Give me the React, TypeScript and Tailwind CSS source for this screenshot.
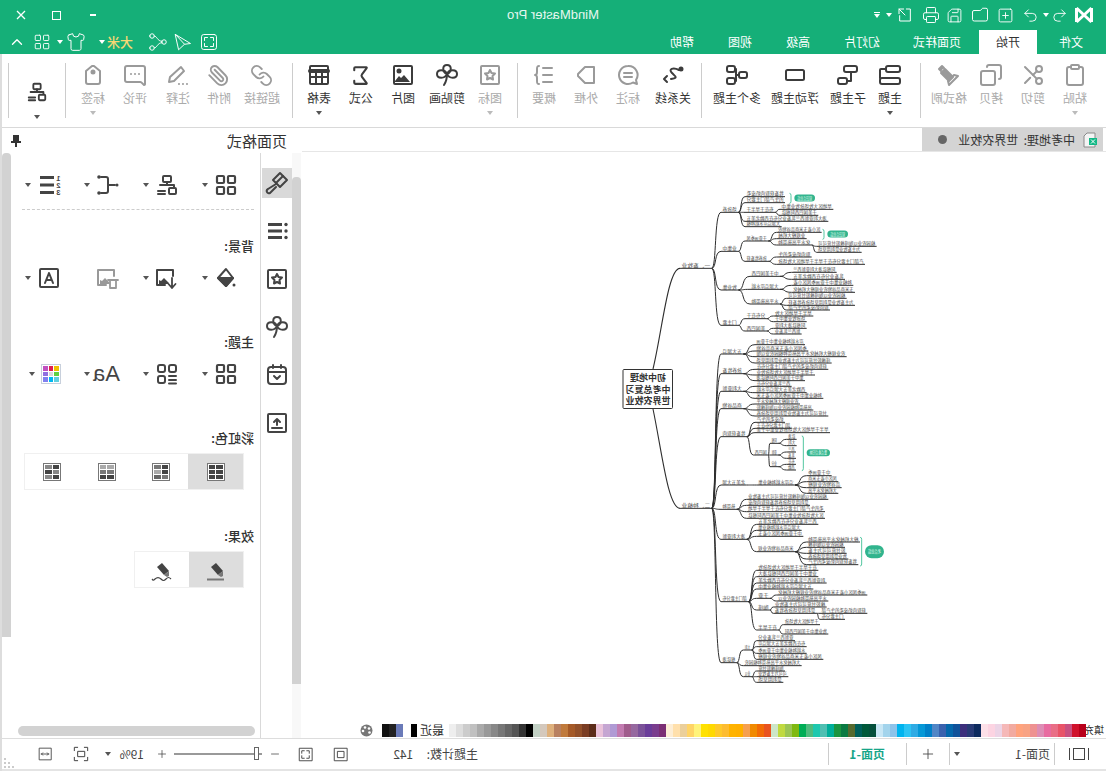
import type { ReactNode } from 'react';
import {
  ChevronUp,
  Clipboard,
  Copy,
  Folder,
  LayoutGrid,
  Link,
  MessageSquareMore,
  Minus,
  Paperclip,
  Plus,
  Printer,
  Redo2,
  Save,
  Scissors,
  Shirt,
  Sigma,
  SquarePlus,
  Undo2,
} from 'lucide-react';

const Svg = ({ children, size = 24 }: { children: ReactNode; size?: number }) => (
  <svg
    width={size}
    height={size}
    viewBox="0 0 24 24"
    fill="none"
    stroke="currentColor"
    strokeWidth="2"
    strokeLinecap="round"
    strokeLinejoin="round"
  >
    {children}
  </svg>
);

const Caret = ({ light }: { light?: boolean }) => (
  <span
    className={`block h-0 w-0 border-x-[3px] border-t-[4px] border-x-transparent ${
      light ? 'border-t-[#bbbbbb]' : 'border-t-[#555555]'
    }`}
  />
);

const TopicIcon = () => (
  <Svg>
    <rect x="2" y="3" width="14" height="6" rx="2" />
    <rect x="2" y="15" width="20" height="6" rx="2" />
    <path d="M16 6h5a1 1 0 0 1 1 1v8" />
  </Svg>
);
const SubTopicIcon = () => (
  <Svg>
    <rect x="3" y="3" width="13" height="6" rx="2" />
    <rect x="13" y="15" width="9" height="6" rx="2" />
    <path d="M9 9v9h4" />
  </Svg>
);
const FloatIcon = () => (
  <Svg>
    <rect x="3" y="7" width="18" height="10" rx="1.5" />
  </Svg>
);
const MultiIcon = () => (
  <Svg>
    <rect x="2" y="9" width="8" height="6" rx="2" />
    <rect x="14" y="3" width="8" height="6" rx="2" />
    <rect x="14" y="15" width="8" height="6" rx="2" />
    <path d="M10 12h2M14 6h-1v12h1" />
  </Svg>
);
const RelationIcon = () => (
  <Svg>
    <path d="M6 7c6-3 11-1 7 3-3 3-7 5 1 6" />
    <circle cx="4" cy="6" r="1.5" fill="currentColor" />
    <path d="M18 13l3 3-3 3" />
  </Svg>
);
const CalloutIcon = () => (
  <Svg>
    <path d="M12 3a9 9 0 1 1-5 16.500l-4 1.500 1-4A9 9 0 0 1 12 3z" />
    <path d="M8 10h8M8 14h8" />
  </Svg>
);
const BoundaryIcon = () => (
  <Svg>
    <path d="M4 4h9l7 7v2l-7 7H4z" />
  </Svg>
);
const SummaryIcon = () => (
  <Svg>
    <path d="M4 5h9M4 12h9M4 19h9" />
    <path d="M17 3c2 0 2 1 2 3v3c0 2 1 3 2 3-1 0-2 1-2 3v3c0 2 0 3-2 3" />
  </Svg>
);
const StickerIcon = () => (
  <Svg>
    <rect x="3" y="3" width="18" height="18" rx="1" />
    <path d="M12 7l1.500 3 3.500.5-2.500 2.500.5 3.500-3-1.500-3 1.500.5-3.500L7 10.500l3.500-.5z" />
  </Svg>
);
const PictureIcon = () => (
  <Svg>
    <rect x="3" y="3" width="18" height="18" rx="1" />
    <path d="M5 19l6-7 3 3 2-2 4 5v1H5z" fill="currentColor" stroke="none" />
    <circle cx="16" cy="8" r="1.500" fill="currentColor" />
  </Svg>
);
const TableIcon = () => (
  <Svg>
    <rect x="3" y="3" width="18" height="18" rx="1" />
    <path d="M3 8h18" strokeWidth="4" />
    <path d="M3 14h18M9 10v11M15 10v11" />
  </Svg>
);
const PencilIcon = () => (
  <Svg>
    <path d="M6 8l3-4 11 10 1 5-5-1z" />
    <path d="M3 21h.01M7 21h.01M11 21h.01" />
  </Svg>
);
const TagIcon = () => (
  <Svg>
    <path d="M7 21a2 2 0 0 1-2-2V8l6-5h2l6 5v11a2 2 0 0 1-2 2z" />
    <circle cx="12" cy="9" r="1.500" fill="currentColor" />
  </Svg>
);
const BrushIcon = () => (
  <Svg>
    <path d="M8 14l8-8 4 4-8 8z" fill="currentColor" />
    <path d="M3 13l4-1 6 6-1 4z" />
    <path d="M17 5l2-2 3 3-2 2" fill="currentColor" />
  </Svg>
);
const TrefoilIcon = () => (
  <Svg>
    <path d="M12 11C7 9 7 2 12 2s5 7 0 9z" />
    <path d="M12 11C10 6 2 6 2 11s8 5 10 0z" />
    <path d="M12 11c2-5 10-5 10 0s-8 5-10 0z" />
    <path d="M12 11c0 4 1 8 3 11" />
  </Svg>
);
const PaintToolIcon = () => (
  <Svg>
    <path d="M2 9l7-7 7 7-7 7z" />
    <path d="M6 5l7 7" />
    <path d="M13 13l8 5a2 2 0 0 1-2 4l-6-6" />
  </Svg>
);
const OrgIcon = ({ size = 24 }: { size?: number }) => (
  <Svg size={size}>
    <rect x="8" y="3" width="8" height="6" rx="1" />
    <rect x="3" y="15" width="7" height="6" rx="1" />
    <path d="M12 9v3M5 14v-2h14M14 18h7M14 21h7" />
  </Svg>
);
const FishIcon = () => (
  <Svg>
    <path d="M5 12h7M19 4h-5a2 2 0 0 0-2 2v12a2 2 0 0 0 2 2h5" />
    <circle cx="3" cy="12" r="1.500" fill="currentColor" stroke="none" />
    <circle cx="21" cy="4" r="1.800" fill="currentColor" stroke="none" />
    <circle cx="21" cy="20" r="1.800" fill="currentColor" stroke="none" />
  </Svg>
);
const OutlineIcon = () => (
  <svg width="24" height="24" viewBox="0 0 24 24" fill="currentColor">
    <rect x="7" y="3" width="14" height="3" />
    <rect x="7" y="10.500" width="14" height="3" />
    <rect x="7" y="18" width="14" height="3" />
    <text x="0.500" y="8" fontSize="7.500" fontWeight="700" fontFamily="Liberation Sans">1</text>
    <text x="0.500" y="15" fontSize="7.500" fontWeight="700" fontFamily="Liberation Sans">2</text>
    <text x="0.500" y="22" fontSize="7.500" fontWeight="700" fontFamily="Liberation Sans">3</text>
  </svg>
);
const DotListIcon = () => (
  <svg width="24" height="24" viewBox="0 0 24 24" fill="currentColor">
    <rect x="7" y="4" width="14" height="3" />
    <rect x="7" y="10.500" width="14" height="3" />
    <rect x="7" y="17" width="14" height="3" />
    <circle cx="3" cy="5.500" r="1.700" />
    <circle cx="3" cy="12" r="1.700" />
    <circle cx="3" cy="18.500" r="1.700" />
  </svg>
);
const BucketIcon = () => (
  <Svg>
    <path d="M12 3l8 9-8 8-7-8z" />
    <path d="M5 12h15l-8 8z" fill="currentColor" />
    <circle cx="4" cy="19" r="1.500" fill="currentColor" stroke="none" />
  </Svg>
);
const BgPicIcon = ({ trash }: { trash?: boolean }) => (
  <Svg>
    <path d="M6 10V4h16v15h-8" />
    <path d="M10 17l5-5 3 3 2-1v4h-9z" fill="currentColor" stroke="none" />
    {trash ? (
      <path d="M2 14h10M4 14v8h6v-8" strokeWidth="1.800" />
    ) : (
      <path d="M7 12v10M3.500 18L7 22l3.500-4" strokeWidth="1.800" />
    )}
  </Svg>
);
const BoxLetterIcon = () => (
  <Svg>
    <rect x="3" y="3" width="18" height="18" rx="1" />
    <path d="M8 17l4-10 4 10M9.500 14h5" />
  </Svg>
);
const ThemeListIcon = () => (
  <Svg>
    <rect x="3" y="3" width="7" height="7" rx="2" />
    <rect x="14" y="3" width="7" height="7" rx="2" />
    <rect x="14" y="14" width="7" height="7" rx="2" />
    <path d="M3 14h7M3 18h7M3 21.500h7" />
  </Svg>
);
const ColorGridIcon = () => {
  const colors = [
    '#f0c000', '#e0204f', '#c050c0',
    '#60d040', '#d8d8d8', '#9070e0',
    '#60d0e0', '#00b8f0', '#8080f0',
  ];
  return (
    <span className="grid h-[20px] w-[20px] grid-cols-3 gap-[1px] border border-[#c8d0dc] bg-white p-[1px]">
      {colors.map((c) => (
        <span key={c} className="block" style={{ backgroundColor: c }} />
      ))}
    </span>
  );
};
const RainbowIcon = ({ shades }: { shades: string[] }) => (
  <span className="grid h-[18px] w-[18px] grid-cols-2 gap-[1px] border border-[#777777] bg-white p-[1px]">
    {shades.map((c, i) => (
      <span key={i} className="block" style={{ backgroundColor: c }} />
    ))}
  </span>
);
const HighlightIcon = ({ wave }: { wave?: boolean }) => (
  <svg width="24" height="24" viewBox="0 0 24 24" fill="none" stroke="#444444">
    <path d="M5 13l7-8 5 4-7 8z" fill="#444444" stroke="none" />
    <path d="M10 17l-3 2-2-1 0-5z" fill="#777777" stroke="none" />
    {wave ? (
      <path d="M3 21c2-2 3-2 5 0s3 2 5 0 4-2 6 0 2 1 3 0" strokeWidth="1.200" />
    ) : (
      <path d="M4 21.500h17" stroke="#777777" strokeWidth="2" />
    )}
  </svg>
);
const CalendarIcon = () => (
  <Svg>
    <rect x="3" y="4" width="18" height="17" rx="3" />
    <path d="M3 9h18M8 2v3M16 2v3M9 13l3 3 3-3" />
  </Svg>
);
const UploadBoxIcon = () => (
  <Svg>
    <rect x="3" y="3" width="18" height="18" rx="1" />
    <path d="M12 14V8M9 11l3-3 3 3M7 17h10" />
  </Svg>
);

const ribbonGroups = [
  {
    sep: 'ml-[7px] mr-[9px]',
    items: [
      { label: '粘贴', w: 'w-[42px]', icon: <Clipboard size={24} strokeWidth={2} />, off: true, caret: true },
      { label: '剪切', w: 'w-[42px]', icon: <Scissors size={24} strokeWidth={2} />, off: true },
      { label: '拷贝', w: 'w-[42px]', icon: <Copy size={24} strokeWidth={2} />, off: true },
      { label: '格式刷', w: 'w-[42px]', icon: <BrushIcon />, off: true },
    ],
  },
  {
    sep: 'ml-[9px] mr-[7px]',
    items: [
      { label: '主题', w: 'w-[42px]', icon: <TopicIcon />, caret: true },
      { label: '子主题', w: 'w-[42px]', icon: <SubTopicIcon /> },
      { label: '浮动主题', w: 'w-[64px]', icon: <FloatIcon /> },
      { label: '多个主题', w: 'w-[52px]', icon: <MultiIcon /> },
    ],
  },
  {
    sep: 'ml-[2px] mr-[6px]',
    items: [
      { label: '关系线', w: 'w-[42px]', icon: <RelationIcon /> },
      { label: '标注', w: 'w-[48px]', icon: <CalloutIcon />, off: true },
      { label: '外框', w: 'w-[36px]', icon: <BoundaryIcon />, off: true },
      { label: '概要', w: 'w-[48px]', icon: <SummaryIcon />, off: true },
    ],
  },
  {
    sep: 'ml-[4px] mr-[9px]',
    items: [
      { label: '图标', w: 'w-[42px]', icon: <StickerIcon />, off: true, caret: true },
      { label: '剪贴画', w: 'w-[44px]', icon: <TrefoilIcon /> },
      { label: '图片', w: 'w-[44px]', icon: <PictureIcon /> },
      { label: '公式', w: 'w-[40px]', icon: <Sigma size={25} strokeWidth={2} /> },
      { label: '表格', w: 'w-[44px]', icon: <TableIcon />, caret: true },
    ],
  },
  {
    sep: 'ml-[9px] mr-0',
    items: [
      { label: '超链接', w: 'w-[42px]', icon: <Link size={23} strokeWidth={2} />, off: true },
      { label: '附件', w: 'w-[44px]', icon: <Paperclip size={23} strokeWidth={2} />, off: true },
      { label: '注释', w: 'w-[38px]', icon: <PencilIcon />, off: true },
      { label: '评论', w: 'w-[48px]', icon: <MessageSquareMore size={24} strokeWidth={2} />, off: true },
      { label: '标签', w: 'w-[36px]', icon: <TagIcon />, off: true, caret: true },
    ],
  },
];

const swatches = [
  '#b8001a', '#d0112b', '#c85080', '#e85468', '#e96e86', '#e86ba0', '#dd8db5', '#ee9191', '#f8a283', '#ffa37d',
  '#f2aaa0', '#f5b8b8', '#ecd4e6', '#fcd4e2', '#fde0e8', '#0d2a5e', '#283a75', '#3c2f7c', '#10529a', '#0568ab',
  '#3a62ae', '#5186c6', '#0080c8', '#0598d7', '#2fabe4', '#2cc4f4', '#00b4ef', '#8dc3ea', '#a3d4ec', '#c9e7f5',
  '#05503c', '#00593a', '#005f5a', '#566a2e', '#0a7a42', '#1a9440', '#00ae9a', '#4fbfb2', '#1dc8ae', '#4fbb7d',
  '#00ad56', '#7fb910', '#9bc554', '#c0d940', '#cde6c8', '#e9531f', '#f26b05', '#f18a00', '#f6a050', '#ffb000',
  '#ffb300', '#fdbc30', '#ffc92a', '#ffd900', '#ffe100', '#fff37a', '#ffd466', '#ebcf9a', '#ffe0ac', '#fdeed6',
  '#7c2f75', '#7a3d8e', '#6a3d99', '#7b5299', '#96689f', '#a05c8c', '#c27bb0', '#b09ad4', '#c5a6d2', '#eac3da',
  '#5c2d1a', '#7a3d24', '#92502a', '#a55a28', '#c07a3c', '#b88060', '#deb07c', '#d4c8bc', '#c2d0c4', '#000000',
  '#333333', '#555555', '#666666', '#777777', '#888888', '#999999', '#aaaaaa', '#c0c0c0', '#cccccc', '#dddddd',
  '#eeeeee',
];

type MapNode = { a: number; b: number; y: number; k?: MapNode[]; t?: string };
const n = (a: number, b: number, y: number, k?: MapNode[], t?: string): MapNode => ({ a, b, y, k, t });
const z8 = 750;

const mapTree: MapNode[] = [
  n(210, 305, 265, [
    n(333, 385, 97, [
      n(405, 525, 50),
      n(405, 525, 68),
      n(405, 495, 97, [n(510, 670, 88), n(510, 625, 106)]),
      n(405, 655, 124),
      n(405, 515, 140),
    ]),
    n(333, 385, 214, [
      n(405, 475, 183, [
        n(500, 635, 157),
        n(500, 590, 176),
        n(500, 605, 195, [n(620, 800, 199), n(620, 755, 217)]),
      ]),
      n(405, 475, 244, [n(500, 605, 231), n(500, 765, 253)]),
    ]),
    n(333, 385, 330, [
      n(420, 510, 289, [n(545, 680, 277), n(545, 705, 298)]),
      n(420, 510, 328, [n(545, 730, 316), n(545, 735, 337)]),
      n(420, 510, 372, [n(530, 710, 355), n(530, 735, 376), n(530, 660, 390)]),
    ]),
    n(333, 385, 436, [
      n(405, 470, 416, [n(490, 610, 408), n(490, 590, 425)]),
      n(405, 470, 453, [n(490, 590, 445), n(490, 575, 462)]),
    ]),
  ], '一、畜牧业'),
  n(210, 305, z8 + 235, [
    n(333, 400, 522, [n(435, 585, 494), n(435, 595, 513), n(435, 710, 530), n(435, 665, 549)]),
    n(333, 400, 581, [n(435, 655, 568), n(435, 615, 585), n(435, 585, 602)]),
    n(333, 400, 634, [n(435, 545, 619), n(435, 590, 638), n(435, 640, 655)]),
    n(333, 400, 686, [n(435, 570, 672), n(435, 610, 690), n(435, 655, 708)]),
    n(333, 410, z8 + 20, [
      n(435, 525, 727),
      n(435, 545, 745),
      n(435, 660, z8 + 8),
      n(430, 475, z8 + 75, [
        n(480, 505, z8 + 40, [n(530, 560, z8 + 28), n(530, 560, z8 + 47)]),
        n(480, 505, z8 + 75, [n(530, 558, z8 + 66), n(530, 558, z8 + 85)]),
        n(480, 505, z8 + 110, [n(530, 558, z8 + 103), n(530, 558, z8 + 120)]),
      ]),
    ]),
    n(333, 410, z8 + 165, [
      n(440, 555, z8 + 165, [
        n(590, 665, z8 + 137),
        n(590, 685, z8 + 155),
        n(590, 695, z8 + 173),
        n(590, 685, z8 + 190),
      ]),
    ]),
    n(333, 380, z8 + 238, [
      n(410, 655, z8 + 208),
      n(410, 600, z8 + 226),
      n(410, 645, z8 + 245),
      n(410, 645, z8 + 265),
    ]),
    n(333, 410, z8 + 328, [
      n(440, 625, z8 + 283),
      n(440, 575, z8 + 301),
      n(440, 580, z8 + 319),
      n(440, 555, z8 + 365, [
        n(590, 750, z8 + 336),
        n(590, 705, z8 + 352),
        n(590, 710, z8 + 370),
        n(590, 715, z8 + 387),
        n(590, 745, z8 + 404),
      ]),
    ]),
    n(333, 415, z8 + 515, [
      n(440, 625, z8 + 421),
      n(440, 625, z8 + 440),
      n(440, 650, z8 + 459),
      n(440, 610, z8 + 477),
      n(440, 480, z8 + 505, [n(500, 772, z8 + 495), n(500, 655, z8 + 513)]),
      n(440, 480, z8 + 540, [
        n(490, 650, z8 + 531),
        n(490, 620, z8 + 550, [n(630, 772, z8 + 550), n(630, 705, z8 + 568)]),
      ]),
      n(440, 505, z8 + 600, [n(520, 630, z8 + 584), n(520, 655, z8 + 612)]),
    ]),
    n(333, 380, z8 + 698, [
      n(400, 425, z8 + 660, [
        n(440, 555, z8 + 632),
        n(440, 590, z8 + 650),
        n(440, 590, z8 + 670),
        n(440, 640, z8 + 688),
      ]),
      n(400, 575, z8 + 707),
      n(400, 425, z8 + 740, [n(440, 525, z8 + 723), n(440, 535, z8 + 740), n(440, 520, z8 + 757)]),
    ]),
  ], '二、种植业'),
];

const words =
  '畜牧业是利用草场放养牲畜获取肉奶皮毛的生产部门主要分布在干旱半干旱地区大牧场放牧业集中于美国巴西阿根廷澳大利亚新西兰乳畜业分布在西欧北美五大湖沿岸水稻种植业集中于亚洲季风区小麦玉米商品谷物农业规模大机械化水平高热带种植园农业以咖啡橡胶甘蔗可可为主';

// reference is a mirror image, the whole page is flipped so x runs from the far side
const mx = (zx: number) => 1106 - (610 + zx / 3);
const my = (zy: number) => 180 + zy / 3 - 152;

const curve = (ax: number, ay: number, bx: number, by: number) => {
  const d = bx - ax;
  return `M${ax} ${ay}C${ax + d * 0.55} ${ay} ${ax + d * 0.25} ${by} ${bx} ${by}`;
};

const mapPaths: string[] = [];
const mapTexts: { x: number; y: number; w: number; s: string }[] = [];
let cursor = 0;
const walk = (node: MapNode, parent?: MapNode) => {
  const left = mx(node.b);
  const right = mx(node.a);
  mapPaths.push(`M${right} ${my(node.y)}H${left}`);
  if (parent) mapPaths.push(curve(mx(parent.b), my(parent.y), right, my(node.y)));
  const w = right - left - 3;
  const len = Math.max(2, Math.round(w / 4.4));
  const s = node.t ?? (words + words).slice(cursor, cursor + len);
  cursor = (cursor + len) % words.length;
  mapTexts.push({ x: left + 1.500, y: my(node.y) - 1.500, w, s });
  node.k?.forEach((c) => walk(c, node));
};
mapTree.forEach((r) => walk(r));

const pills = [
  { a: 553, b: 615, y: 54, s: '知识点总结' },
  { a: 652, b: 714, y: 162, s: '知识点总结' },
  { a: 590, b: 660, y: z8 + 68, s: '重点难点归纳' },
  { a: 765, b: 822, y: z8 + 365, s: '考点总结', tall: true },
];
const brackets = [
  { x: 543, y1: 40, y2: 70 },
  { x: 642, y1: 148, y2: 178 },
  { x: 580, y1: z8 + 18, y2: z8 + 122 },
  { x: 755, y1: z8 + 322, y2: z8 + 408 },
];

function MindMap() {
  const rootX = 1106 - 673;
  return (
    <svg viewBox="0 0 804 570" className="block h-[570px] w-[804px]" fontFamily="Noto Sans CJK SC, sans-serif">
      <g fill="none" stroke="#2e2e2e" strokeWidth="1">
        {mapPaths.map((d, i) => (
          <path key={i} d={d} />
        ))}
        <path d={`M${1106 - 653} 217C${1106 - 662} 180 ${1106 - 668} 116 ${mx(210)} ${my(265)}`} strokeWidth="1.100" />
        <path d={`M${1106 - 653} 257C${1106 - 662} 300 ${1106 - 668} 356 ${mx(210)} ${my(z8 + 235)}`} strokeWidth="1.100" />
      </g>
      <g fill="#444444" fontSize="4.500">
        {mapTexts.map((t, i) => (
          <text key={i} x={t.x} y={t.y} textLength={t.w} lengthAdjust="spacingAndGlyphs">
            {t.s}
          </text>
        ))}
      </g>
      {brackets.map((b) => (
        <path
          key={b.y1}
          d={`M${mx(b.x) + 1.500} ${my(b.y1)}Q${mx(b.x)} ${my(b.y1)} ${mx(b.x)} ${my(b.y1) + 2}V${my(b.y2) - 2}Q${mx(b.x)} ${my(b.y2)} ${mx(b.x) + 1.500} ${my(b.y2)}`}
          fill="none"
          stroke="#3fbf95"
          strokeWidth="0.900"
        />
      ))}
      {pills.map((p) => {
        const h = p.tall ? 6.500 : 3.500;
        return (
          <g key={p.y}>
            <rect x={mx(p.b)} y={my(p.y) - h} width={(p.b - p.a) / 3} height={h * 2} rx={h} fill="#31b48d" />
            <text x={mx(p.b) + 3} y={my(p.y) + 1.500} fontSize="4.500" fill="#e8fff6" textLength={(p.b - p.a) / 3 - 6} lengthAdjust="spacingAndGlyphs">
              {p.s}
            </text>
          </g>
        );
      })}
      <rect x={rootX + 0.500} y={217.500} width="49.500" height="39" rx="1" fill="#ffffff" stroke="#333333" />
      <g fill="#333333" fontSize="9" fontWeight="700" textAnchor="middle">
        <text x={rootX + 25} y={228.500}>初中地理</text>
        <text x={rootX + 25} y={240.500}>中考总复习</text>
        <text x={rootX + 25} y={252}>世界农牧业</text>
      </g>
    </svg>
  );
}

function ToolRow({ cells }: { cells: { icon: ReactNode; caret?: boolean; off?: boolean }[] }) {
  return (
    <div className="grid h-[24px] w-[244px] grid-cols-4 pl-[8px]">
      {cells.map((c, i) => (
        <div key={i} className={`flex items-center pl-[14px] ${c.off ? 'text-[#999999]' : 'text-[#444444]'}`}>
          {c.icon}
          {c.caret !== false && (
            <span className="ml-[6px]">
              <Caret />
            </span>
          )}
        </div>
      ))}
    </div>
  );
}

function RibbonItem({ label, w, icon, off, caret }: { label: string; w: string; icon: ReactNode; off?: boolean; caret?: boolean }) {
  return (
    <div className={`flex flex-col items-center pt-[9px] ${w} ${off ? 'text-[#9a9a9a]' : 'text-[#3c3c3c]'}`}>
      <div className="flex h-[24px] items-center justify-center">{icon}</div>
      <div className={`mt-[3px] whitespace-nowrap text-xs leading-4 ${off ? 'text-[#aaaaaa]' : 'text-[#333333]'}`}>{label}</div>
      {caret && (
        <span className="mt-[5px]">
          <Caret light={off} />
        </span>
      )}
    </div>
  );
}

export default function App() {
  return (
    <div className="relative flex h-[771px] w-[1106px] -scale-x-100 flex-col overflow-hidden bg-white font-['Noto_Sans_CJK_SC','Liberation_Sans',sans-serif] text-xs text-[#333333]">
      {/* title bar */}
      <div className="grid h-[30px] grid-cols-[1fr_auto_1fr] items-center bg-[#15af78] text-white">
        <div className="flex items-center">
          <svg width="20" height="18" viewBox="0 0 20 18" className="ml-[12px]" fill="none" stroke="#ffffff" strokeWidth="3">
            <path d="M2.500 2v14M17.500 2v14M2.500 2l15 14M17.500 2l-15 14" />
          </svg>
          <div className="ml-[5px] flex w-[18px] justify-center"><Undo2 size={17} strokeWidth={1.300} /></div>
          <span className="ml-[2px] [&>span]:border-t-white"><Caret /></span>
          <div className="ml-[2px] flex w-[20px] justify-center"><Redo2 size={17} strokeWidth={1.300} /></div>
          <div className="ml-[5px] flex w-[20px] justify-center"><SquarePlus size={17} strokeWidth={1.300} /></div>
          <div className="ml-[6px] flex w-[20px] justify-center"><Folder size={18} strokeWidth={1.300} /></div>
          <div className="ml-[5px] flex w-[20px] justify-center"><Save size={17} strokeWidth={1.300} /></div>
          <div className="ml-[4px] flex w-[20px] justify-center"><Printer size={18} strokeWidth={1.300} /></div>
          <div className="ml-[6px] flex w-[20px] justify-center">
            <Svg size={16}>
              <path d="M10 3H4v18h16v-8M14 3h7v7M21 3l-9 9" strokeWidth="1.500" />
            </Svg>
          </div>
          <span className="ml-[3px] [&>span]:border-t-white"><Caret /></span>
          <span className="ml-[6px] flex flex-col items-center gap-[1px]">
            <span className="block h-[1px] w-[6px] bg-white" />
            <span className="[&>span]:border-t-white"><Caret /></span>
          </span>
        </div>
        <div className="text-[13px] text-[#e6f7f0] font-['Liberation_Sans',sans-serif]">MindMaster Pro</div>
        <div className="flex items-center justify-end">
          <span className="block h-[2px] w-[6px] bg-white" />
          <span className="ml-[29px] block h-[9px] w-[9px] border-[1.500px] border-white" />
          <svg width="10" height="10" viewBox="0 0 10 10" className="ml-[26px] mr-[16px]" stroke="#ffffff" strokeWidth="1.300">
            <path d="M1 1l8 8M9 1l-8 8" />
          </svg>
        </div>
      </div>

      {/* tabs */}
      <div className="flex h-[24px] items-stretch bg-[#15af78] text-xs text-white">
        <div className="ml-[8px] flex w-[54px] items-center justify-center">文件</div>
        <div className="ml-[7px] flex w-[58px] items-center justify-center bg-white text-[#333333]">开始</div>
        <div className="flex w-[84px] items-center justify-center">页面样式</div>
        <div className="flex w-[66px] items-center justify-center">幻灯片</div>
        <div className="flex w-[62px] items-center justify-center">高级</div>
        <div className="flex w-[54px] items-center justify-center">视图</div>
        <div className="flex w-[62px] items-center justify-center">帮助</div>
        <div className="ml-auto flex items-center pr-[8px]">
          <Svg size={18}>
            <rect x="2" y="2" width="20" height="20" rx="3" strokeWidth="1.300" />
            <path d="M6 10V6h4M18 14v4h-4M18 10V6h-4M6 14v4h4" strokeWidth="1.300" />
          </Svg>
          <span className="ml-[8px]">
            <Svg size={18}>
              <path d="M22 2L2 14l8 1 7.500 7zM22 2L10 15" strokeWidth="1.300" />
            </Svg>
          </span>
          <span className="ml-[7px]">
            <Svg size={18}>
              <circle cx="4" cy="12" r="3" strokeWidth="1.300" />
              <circle cx="20" cy="4" r="3" strokeWidth="1.300" />
              <circle cx="20" cy="20" r="3" strokeWidth="1.300" />
              <path d="M7 11c6 0 6-7 10-7M7 13c6 0 6 7 10 7" strokeWidth="1.300" />
            </Svg>
          </span>
          <span className="ml-[16px] w-[26px] whitespace-nowrap text-[13px] font-medium text-[#f7d774]">大米</span>
          <span className="ml-[2px] [&>span]:border-t-white"><Caret /></span>
          <span className="ml-[13px]"><Shirt size={20} strokeWidth={1.200} /></span>
          <span className="ml-[3px] [&>span]:border-t-white"><Caret /></span>
          <span className="ml-[6px]"><LayoutGrid size={18} strokeWidth={1.200} /></span>
          <span className="ml-[7px]"><ChevronUp size={18} strokeWidth={1.800} /></span>
        </div>
      </div>

      {/* ribbon */}
      <div className="flex h-[74px] items-start border-b border-[#d9d9d9] pl-[10px]">
        {ribbonGroups.map((g, gi) => (
          <div key={gi} className="flex h-full">
            {g.items.map((it) => (
              <RibbonItem key={it.label} {...it} />
            ))}
            <div className={`mt-[9px] h-[55px] w-px bg-[#cccccc] ${g.sep}`} />
          </div>
        ))}
        <div className="flex h-full w-[56px] flex-col items-center pt-[27px] text-[#3c3c3c]">
          <OrgIcon size={22} />
          <span className="mt-[12px]"><Caret /></span>
        </div>
        <div className="mt-[9px] h-[55px] w-px bg-[#cccccc]" />
      </div>

      <div className="flex min-h-0 flex-1 border-b border-[#dddddd]">
        {/* document side */}
        <div className="flex w-[804px] flex-col">
          <div className="flex h-[24px] border-b border-[#e6e6e6]">
            <div className="ml-[3px] flex w-[181px] items-center bg-[#d4d4d4] pl-[6px] text-[#333333]">
              <svg width="14" height="16" viewBox="0 0 14 16" className="shrink-0">
                <path d="M2 1h8l3 3v11H2z" fill="#f4f4f4" stroke="#8a8a8a" />
                <rect x="0" y="6" width="8" height="7" fill="#12b886" />
                <path d="M2 7.500l4 4M6 7.500l-4 4" stroke="#ffffff" />
              </svg>
              <span className="ml-[8px] whitespace-pre">中考地理:  世界农牧业</span>
              <span className="ml-[11px] block h-[9px] w-[9px] rounded-full bg-[#666666]" />
            </div>
          </div>
          <div className="min-h-0 flex-1 overflow-hidden">
            <MindMap />
          </div>
          <div className="flex h-[16px] items-center">
            <span className="ml-[2px] w-[18px] whitespace-nowrap text-[10px] leading-none">填充</span>
            <div className="flex">
              {swatches.map((c, i) => (
                <span key={i} className="block h-[13px] w-[7px]" style={{ backgroundColor: c }} />
              ))}
            </div>
            <span className="ml-[5px] whitespace-nowrap text-xs leading-none">最近</span>
            <span className="ml-[3px] block h-[13px] w-[6px] bg-black" />
            <span className="ml-[8px] block h-[13px] w-[7px] bg-[#6a7ab8]" />
            <span className="block h-[13px] w-[7px] bg-[#222222]" />
            <span className="block h-[13px] w-[7px] bg-[#111111]" />
            <svg width="13" height="13" viewBox="0 0 13 13" className="ml-[9px]">
              <circle cx="6.500" cy="6.500" r="6" fill="#777777" />
              <circle cx="4" cy="4.500" r="1.300" fill="#ffffff" />
              <circle cx="8" cy="3.500" r="1.300" fill="#ffffff" />
              <circle cx="10" cy="7" r="1.300" fill="#ffffff" />
              <circle cx="3.500" cy="8.500" r="1.300" fill="#ffffff" />
            </svg>
          </div>
        </div>

        {/* page format panel */}
        <div className="flex w-[302px] flex-col">
          <div className="flex h-[25px] items-center">
            <span className="ml-[15px] text-[15px] leading-none">页面格式</span>
            <svg width="10" height="12" viewBox="0 0 10 12" className="ml-[206px]" fill="#333333">
              <path d="M2 0h6v6h2v2H6v4H4V8H0V6h2z" />
            </svg>
          </div>
          <div className="flex min-h-0 flex-1">
            <div className="ml-px w-[9px] bg-[#f8f8f8] pt-[24px]">
              <div className="h-[507px] w-[9px] rounded-t-[4px] bg-[#d2d2d2]" />
            </div>
            <div className="flex w-[30px] flex-col items-center gap-[18px] pt-[15px] text-[#444444]">
              <div className="flex h-[30px] w-[30px] items-center justify-center bg-[#d9d9d9]">
                <PaintToolIcon />
              </div>
              <div className="flex h-[30px] items-center"><DotListIcon /></div>
              <div className="flex h-[30px] items-center"><StickerIcon /></div>
              <div className="flex h-[30px] items-center"><TrefoilIcon /></div>
              <div className="flex h-[30px] items-center"><CalendarIcon /></div>
              <div className="flex h-[30px] items-center"><UploadBoxIcon /></div>
            </div>
            <div className="ml-px w-px bg-[#d9d9d9]" />
            <div className="flex w-[249px] flex-col">
              <div className="mt-[20px]">
                <ToolRow
                  cells={[
                    { icon: <LayoutGrid size={24} strokeWidth={2.200} /> },
                    { icon: <OrgIcon /> },
                    { icon: <FishIcon /> },
                    { icon: <OutlineIcon /> },
                  ]}
                />
              </div>
              <div className="ml-[6px] mt-[12px] w-[232px] border-t border-dashed border-[#cccccc]" />
              <div className="ml-[6px] mt-[28px] text-[13px] font-medium leading-4">背景:</div>
              <div className="mt-[12px]">
                <ToolRow
                  cells={[
                    { icon: <BucketIcon /> },
                    { icon: <BgPicIcon /> },
                    { icon: <BgPicIcon trash />, off: true, caret: false },
                    { icon: <BoxLetterIcon /> },
                  ]}
                />
              </div>
              <div className="ml-[6px] mt-[44px] text-[13px] font-medium leading-4">主题:</div>
              <div className="mt-[12px]">
                <ToolRow
                  cells={[
                    { icon: <LayoutGrid size={24} strokeWidth={2.200} /> },
                    { icon: <ThemeListIcon /> },
                    { icon: <span className="w-[24px] text-[22px] leading-none font-['Liberation_Sans',sans-serif]">Aa</span> },
                    { icon: <ColorGridIcon /> },
                  ]}
                />
              </div>
              <div className="ml-[6px] mt-[44px] text-[13px] font-medium leading-4">彩虹色:</div>
              <div className="ml-[16px] mt-[7px] flex h-[37px] w-[220px] border border-[#f0f0f0]">
                {[
                  ['#444444', '#444444', '#444444', '#444444', '#444444', '#444444'],
                  ['#444444', '#777777', '#444444', '#aaaaaa', '#777777', '#666666'],
                  ['#aaaaaa', '#aaaaaa', '#777777', '#777777', '#444444', '#444444'],
                  ['#444444', '#888888', '#888888', '#444444', '#444444', '#888888'],
                ].map((shades, i) => (
                  <div key={i} className={`flex w-[55px] items-center justify-center ${i === 0 ? 'bg-[#dddddd]' : ''}`}>
                    <RainbowIcon shades={shades} />
                  </div>
                ))}
              </div>
              <div className="ml-[6px] mt-[38px] text-[13px] font-medium leading-4">效果:</div>
              <div className="ml-[16px] mt-[7px] flex h-[37px] w-[110px] border border-[#f0f0f0]">
                <div className="flex w-[55px] items-center justify-center bg-[#dddddd]"><HighlightIcon /></div>
                <div className="flex w-[55px] items-center justify-center"><HighlightIcon wave /></div>
              </div>
              <div className="mb-[2px] ml-[5px] mt-auto h-[10px] w-[237px] rounded-[5px] bg-[#d2d2d2]" />
            </div>
            <div className="w-[9px]">
              <div className="h-[484px] w-[9px] rounded-t-[4px] bg-[#d2d2d2]" />
            </div>
          </div>
        </div>
      </div>

      {/* status bar */}
      <div className="relative flex h-[30px] items-center text-[#444444]">
        <svg width="24" height="14" viewBox="0 0 24 14" className="ml-[15px]" fill="none" stroke="#444444">
          <rect x="6.500" y="1.500" width="11" height="11" />
          <path d="M2.500 1v12M21.500 1v12" />
        </svg>
        <span className="ml-[12px] h-[22px] w-px bg-[#cccccc]" />
        <span className="ml-[4px] w-[36px] whitespace-nowrap text-[#444444]">页面-1</span>
        <span className="ml-[54px]"><Caret /></span>
        <span className="ml-[4px] h-[22px] w-px bg-[#cccccc]" />
        <span className="ml-[13px]"><Plus size={16} strokeWidth={1.300} /></span>
        <span className="ml-[13px] h-[22px] w-px bg-[#cccccc]" />
        <span className="ml-[21px] w-[35px] whitespace-nowrap font-bold text-[#17a589]">页面-1</span>
        <span className="ml-[21px] h-[22px] w-[1px] bg-[#cccccc]" />
        <span className="ml-[350px] w-[86px] whitespace-pre">主题计数:     142</span>
        <span className="ml-[44px]">
          <Svg size={15}>
            <rect x="2" y="2" width="20" height="20" strokeWidth="1.500" />
            <rect x="7" y="7" width="10" height="10" strokeWidth="1.500" />
          </Svg>
        </span>
        <span className="ml-[20px]">
          <Svg size={15}>
            <rect x="2" y="2" width="20" height="20" strokeWidth="1.500" />
            <path d="M6 10V6h4M18 14v4h-4M18 10V6h-4M6 14v4h4" strokeWidth="1.500" />
          </Svg>
        </span>
        <span className="ml-[17px]"><Minus size={12} strokeWidth={1.500} /></span>
        <div className="relative ml-[7px] flex w-[88px] items-center">
          <span className="block h-[2px] flex-1 bg-[#999999]" />
          <span className="absolute left-[3px] top-[-6px] block h-[13px] w-[5px] border border-[#666666] bg-white" />
        </div>
        <span className="ml-[6px]"><Plus size={12} strokeWidth={1.500} /></span>
        <span className="ml-[12px] w-[22px]">19%</span>
        <span className="ml-[11px]"><Caret /></span>
        <span className="ml-[16px]">
          <Svg size={16}>
            <path d="M2 7V2h5M17 2h5v5M22 17v5h-5M7 22H2v-5" strokeWidth="1.500" />
            <rect x="7" y="8" width="10" height="8" strokeWidth="1.500" />
          </Svg>
        </span>
        <span className="ml-[21px]">
          <Svg size={14}>
            <rect x="2" y="2" width="20" height="20" strokeWidth="1.500" />
            <path d="M6 12h12M6 12l2-2M6 12l2 2M18 12l-2-2M18 12l-2 2" strokeWidth="1.500" />
          </Svg>
        </span>
        <span className="absolute bottom-[1px] right-[4px] grid grid-cols-3 gap-[2px] opacity-50">
          {[0, 0, 1, 0, 1, 1, 1, 1, 1].map((on, i) => (
            <span key={i} className={`block h-[2px] w-[2px] ${on ? 'bg-[#999999]' : ''}`} />
          ))}
        </span>
      </div>
      <div className="h-[2px] bg-[#e4e4e4]" />
      <div className="absolute bottom-0 right-0 top-[54px] w-[2px] bg-[#dddddd]" />
    </div>
  );
}
